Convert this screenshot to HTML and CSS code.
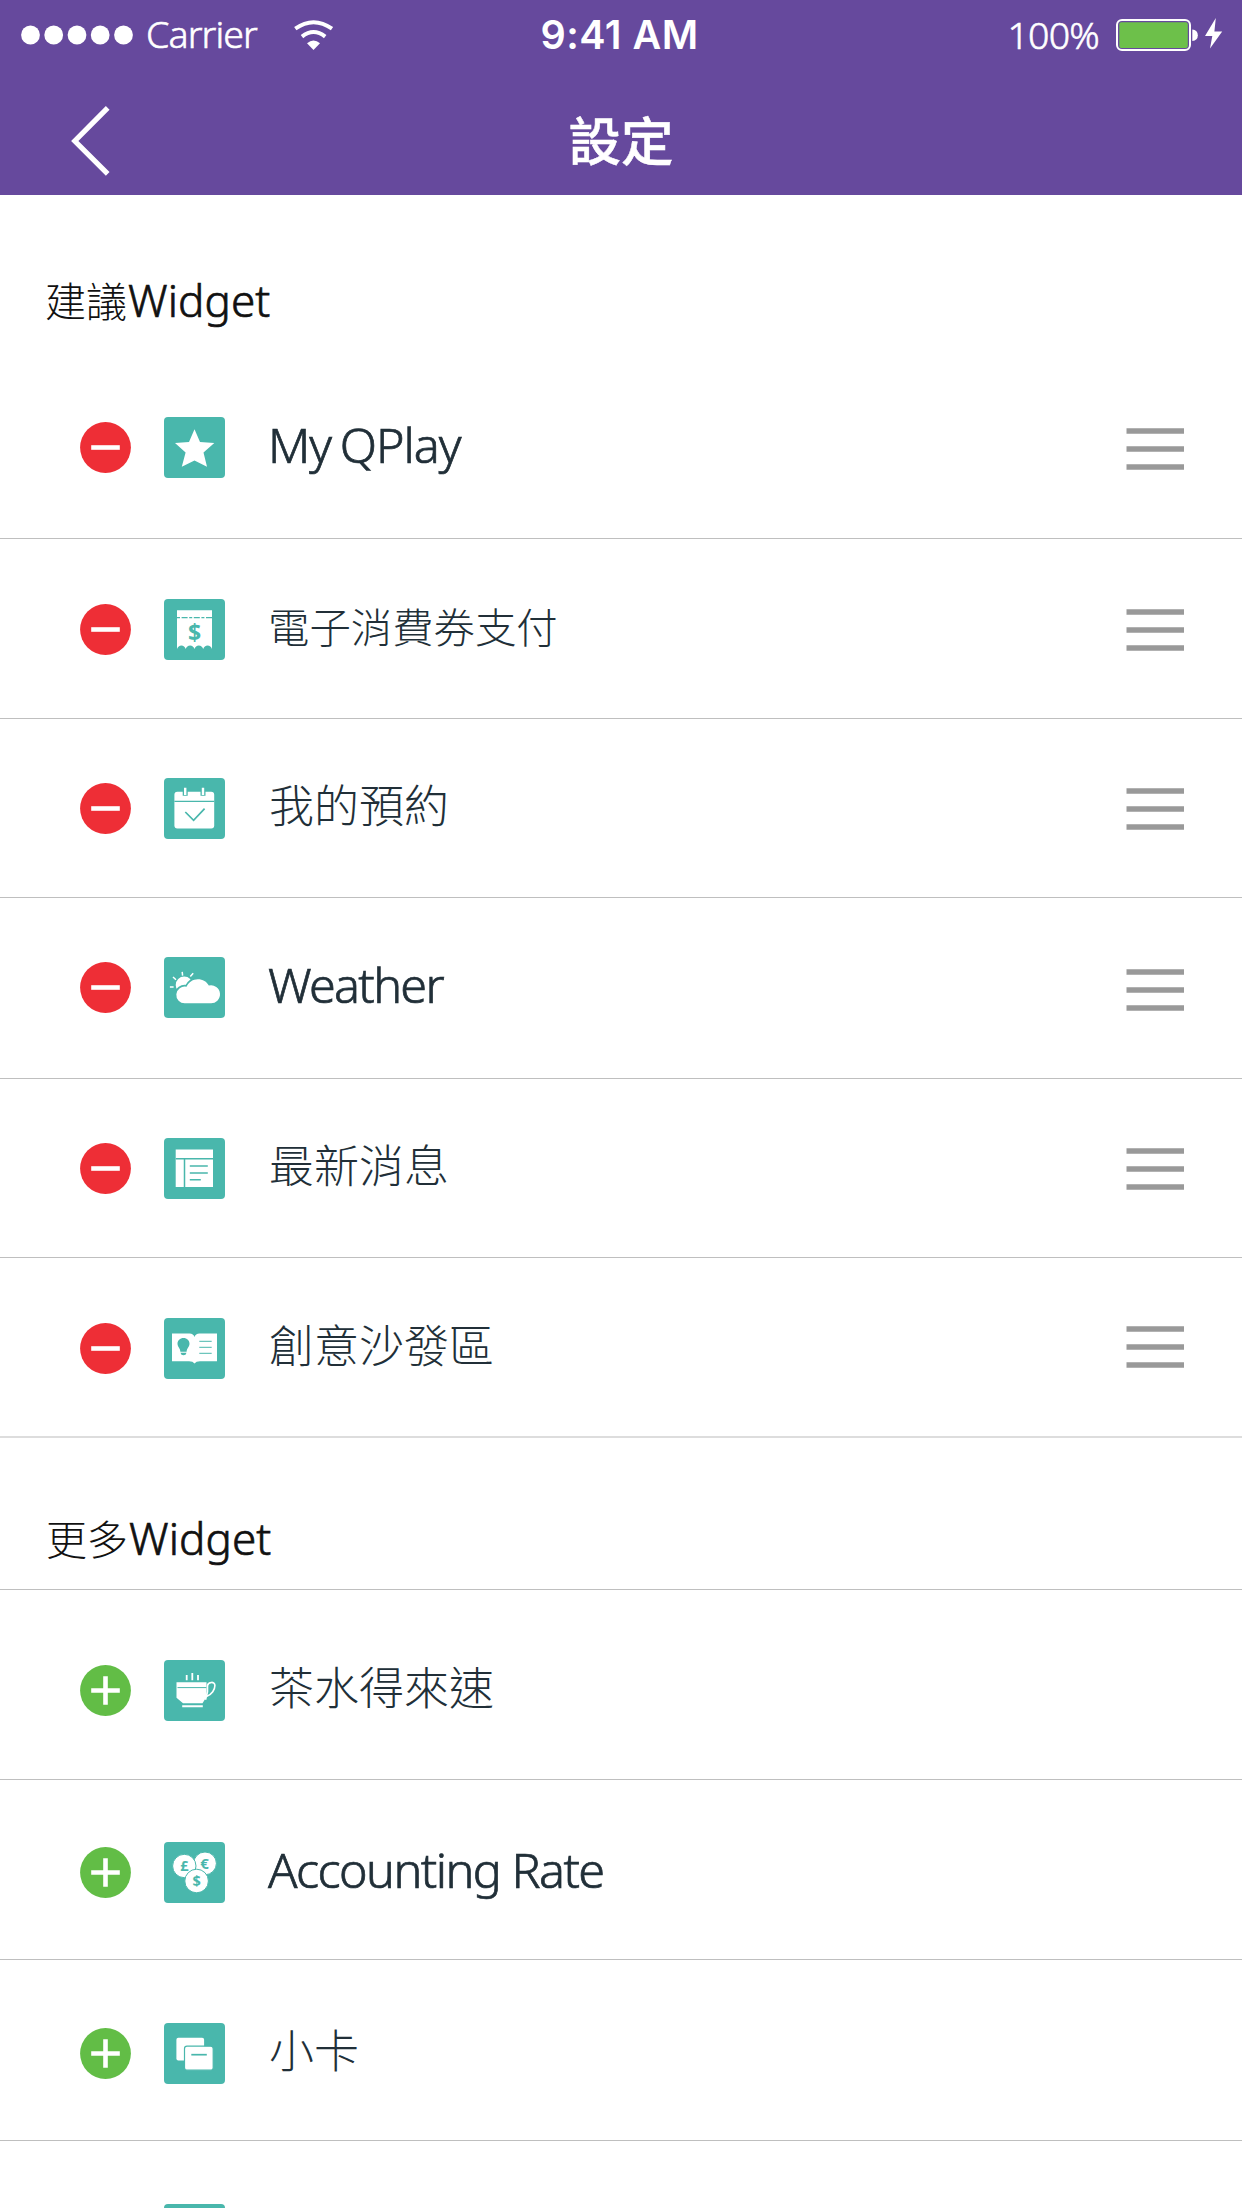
FILE: index.html
```html
<!DOCTYPE html>
<html lang="zh-Hant">
<head>
<meta charset="utf-8">
<title>設定</title>
<link rel="stylesheet" href="styles.css">
</head>
<body>
<svg class="defs" aria-hidden="true">
  <symbol id="minus" viewBox="0 0 51 51"><circle cx="25.5" cy="25.5" r="25.4" fill="#ee2e36"/><path d="M11.2 25.5h28.6" stroke="#fff" stroke-width="4.6"/></symbol>
  <symbol id="plus" viewBox="0 0 51 51"><circle cx="25.5" cy="25.5" r="25.4" fill="#62bd46"/><path d="M11.2 25.5h28.6M25.5 11.2v28.6" stroke="#fff" stroke-width="4.6"/></symbol>
  <symbol id="handle" viewBox="0 0 58 42"><path d="M.5 3h57.500M.5 21h57.500M.5 39h57.500" stroke="#999" stroke-width="5.500"/></symbol>
</svg>

<header class="header">
  <div class="status">
    <div class="status-left">
      <svg class="signal" viewBox="0 0 113 20" fill="#fff"><circle cx="9.500" cy="10" r="9.400"/><circle cx="32.700" cy="10" r="9.400"/><circle cx="56" cy="10" r="9.400"/><circle cx="79.200" cy="10" r="9.400"/><circle cx="102.500" cy="10" r="9.400"/></svg>
      <span class="carrier">Carrier</span>
      <svg class="wifi" viewBox="0 0 40 30" fill="none" stroke="#fff" stroke-width="4"><path d="M1.300 8.700Q19.500-4.300 38 8.700M8 16.600Q19.500 7.400 31.200 16.600"/><path d="M13 23.200Q19.500 18 26 23.200L19.500 30Z" fill="#fff" stroke="none"/></svg>
    </div>
    <span class="clock">9:41 AM</span>
    <div class="status-right">
      <span class="percent">100%</span>
      <svg class="battery" viewBox="0 0 108 33"><rect x="1" y="2" width="73" height="30" rx="5" fill="none" stroke="#fff" stroke-width="2"/><rect x="3.300" y="4.300" width="68.500" height="25.600" rx="2" fill="#6dc04a"/><path d="M76.300 11.500q5.500.5 5.500 5.700t-5.500 5.900z" fill="#fff"/><path d="M99.800 0L89 18h7.300L94 30.500 106.200 13.500h-7.800z" fill="#fff"/></svg>
    </div>
  </div>
  <div class="nav">
    <svg class="back" viewBox="0 0 40 70"><path d="M36.700 1.800L3.800 35l32.900 32.800" fill="none" stroke="#fff" stroke-width="5.200"/></svg>
    <h1 class="title">設定</h1>
  </div>
</header>

<main>
  <h2 class="section">建議<span class="latin">Widget</span></h2>
  <ul class="list">
    <li class="row r1"><svg class="toggle"><use href="#minus"/></svg>
      <svg class="tile" viewBox="0 0 61 61"><path fill="#fff" d="M30.500 12.300L36 25l14.300 1-10.800 9.500L43 49.700l-12.500-6.200-12.700 6.200 3.800-14.200L11 26l14-1z"/></svg>
      <span class="name latin">My QPlay</span><svg class="handle"><use href="#handle"/></svg></li>
    <li class="row r2"><svg class="toggle"><use href="#minus"/></svg>
      <svg class="tile" viewBox="0 0 61 61"><path fill="#fff" d="M13 11.300h35V50q-1.200-3.600-4.400-3.600T39.200 50q-1.200-3.600-4.400-3.600T30.500 50q-1.200-3.600-4.400-3.600T21.700 50q-1.200-3.600-4.300-3.600T13 50z"/><path d="M13 18.700h35" stroke="#49b7ac" stroke-width="1.300" stroke-dasharray="3 1.600 6 1.600"/><text class="glyph" x="30.500" y="41.800" font-size="23">$</text></svg>
      <span class="name small">電子消費券支付</span><svg class="handle"><use href="#handle"/></svg></li>
    <li class="row r3"><svg class="toggle"><use href="#minus"/></svg>
      <svg class="tile" viewBox="0 0 61 61"><rect x="10.400" y="13.700" width="39.800" height="36.700" rx="3" fill="#fff"/><path d="M10.400 23.300h39.800" stroke="#49b7ac" stroke-width="1.300"/><path d="M21.200 12v5.700M39 12v5.700" stroke="#49b7ac" stroke-width="5"/><path d="M21.200 9.700V17M39 9.700V17" stroke="#fff" stroke-width="2.400"/><path d="M21.300 34l8.300 8.300 11-11.600" fill="none" stroke="#49b7ac" stroke-width="1.700"/></svg>
      <span class="name">我的預約</span><svg class="handle"><use href="#handle"/></svg></li>
    <li class="row r4"><svg class="toggle"><use href="#minus"/></svg>
      <svg class="tile" viewBox="0 0 61 61"><circle cx="20.200" cy="28" r="8.500" fill="#fff"/><path d="M18.200 14.800l.4 3.900M29.200 16.200l-2.900 3.400M9 20l3 2.700M5.900 30h3.700" stroke="#fff" stroke-width="1.500"/><path d="M21 46.300a8.400 8.400 0 1 1 1.500-16.600C25 25 29 22.300 33.800 22.300c5 0 9 2.300 11 6.300a9 9 0 1 1 1.500 17.700z" fill="#fff" stroke="#49b7ac" stroke-width="3.400" paint-order="stroke"/></svg>
      <span class="name latin">Weather</span><svg class="handle"><use href="#handle"/></svg></li>
    <li class="row r5"><svg class="toggle"><use href="#minus"/></svg>
      <svg class="tile" viewBox="0 0 61 61"><path fill="#fff" d="M11.700 11.500H49V49H11.700z"/><path d="M11.700 20.700H49M20.500 20.700V49M25.800 28h18M25.800 34.900h18M25.800 41.800h11" stroke="#49b7ac" stroke-width="1.500"/></svg>
      <span class="name">最新消息</span><svg class="handle"><use href="#handle"/></svg></li>
    <li class="row r6"><svg class="toggle"><use href="#minus"/></svg>
      <svg class="tile" viewBox="0 0 61 61"><path fill="#fff" d="M8 15.400h17.500q4 0 5 3.600 1-3.600 5-3.600H53V43.200H36q-4 0-5.500 2.200Q29 43.200 25 43.200H8z"/><path fill="#49b7ac" d="M19.500 20c3.500 0 6 2.500 6 5.700 0 3.100-2.700 4.200-2.900 8.100h-6.200c-.2-3.900-2.900-5-2.900-8.100 0-3.200 2.500-5.700 6-5.700zM16.500 34.700h6q-.5 2.600-3 2.600t-3-2.600z"/><path d="M35.300 23.300h12.400M35.300 29.300h12.400M35.300 35.300h12.400" stroke="#49b7ac" stroke-width="1"/></svg>
      <span class="name">創意沙發區</span><svg class="handle"><use href="#handle"/></svg></li>
  </ul>

  <h2 class="section more">更多<span class="latin">Widget</span></h2>
  <ul class="list">
    <li class="row r7"><svg class="toggle"><use href="#plus"/></svg>
      <svg class="tile" viewBox="0 0 61 61"><path fill="#fff" d="M12.500 22.300h30v14.500l-4 6.500H19l-6.500-5.500zM18.200 45.200h20.600v2H18.200z"/><path d="M13.500 27.600h29" stroke="#49b7ac" stroke-width="1"/><path d="M42.500 36.500c5.500-2 8.400-7 8.400-11 0-4.200-6.600-4-7.400 0v6.300l-2 8" fill="none" stroke="#fff" stroke-width="1.600"/><path d="M22.700 15v5.200M28.300 13v7.200M34 15v5.200" stroke="#fff" stroke-width="1.800"/></svg>
      <span class="name">茶水得來速</span></li>
    <li class="row r8"><svg class="toggle"><use href="#plus"/></svg>
      <svg class="tile" viewBox="0 0 61 61"><g fill="#fff" stroke="#49b7ac" stroke-width="1"><circle cx="41" cy="21.400" r="11.400"/><circle cx="20.300" cy="24" r="11.700"/><circle cx="32.600" cy="39" r="11.800"/></g><text class="glyph" x="20.300" y="28.800" font-size="14.500">£</text><text class="glyph" x="40.500" y="26.500" font-size="15">€</text><text class="glyph" x="32.600" y="43.700" font-size="14.500">$</text></svg>
      <span class="name latin">Accounting Rate</span></li>
    <li class="row r9"><svg class="toggle"><use href="#plus"/></svg>
      <svg class="tile" viewBox="0 0 61 61"><rect x="12.400" y="14.700" width="27.700" height="22.700" rx="2" fill="#fff"/><rect x="20.500" y="23.200" width="28.700" height="24" rx="2.500" fill="#fff" stroke="#49b7ac" stroke-width="1.200"/><path d="M27.300 31.700h15.500" stroke="#49b7ac" stroke-width="1.700"/></svg>
      <span class="name">小卡</span></li>
    <li class="row r10"><span class="toggle"></span><svg class="tile" viewBox="0 0 61 61"></svg></li>
  </ul>
</main>
</body>
</html>
```
FILE: styles.css
```css
* { box-sizing: border-box; margin: 0; padding: 0; }

body {
  height: 2208px;
  overflow: hidden;
  background: #fff;
  font-family: "Noto Sans CJK TC", sans-serif;
  font-weight: 300;
}

svg { display: block; flex: none; overflow: visible; }
.defs { position: absolute; width: 0; height: 0; overflow: hidden; }

/* header */
.header { height: 195px; background: #66499d; color: #fff; }
.status {
  display: grid;
  grid-template-columns: 1fr auto 1fr;
  align-items: center;
  height: 67px;
  padding: 0 21px 0 18px;
  margin-left: 0;
  white-space: nowrap;
}
.status-left, .status-right { display: flex; align-items: center; }
.status-left { padding-left: 3px; }
.status-right { justify-content: flex-end; margin-right: -3px; }
.signal { width: 113px; height: 20px; }
.carrier { width: 146px; margin: -2px 0 0 12px; font: 300 37.5px/67px "Noto Sans", sans-serif; letter-spacing: -.9px; -webkit-text-stroke: .6px; }
.wifi { width: 40px; height: 30px; margin-left: 2px; }
.clock { padding-top: 2px; font: 600 39.5px/67px Inter, sans-serif; letter-spacing: .5px; }
.percent { margin-right: 17px; font: 300 37.5px/67px "Noto Sans", sans-serif; letter-spacing: -.8px; -webkit-text-stroke: .6px; }
.battery { width: 108px; height: 33px; margin-bottom: 1px; }

.nav { display: grid; grid-template-columns: 1fr auto 1fr; align-items: center; height: 149px; margin-top: -1px; padding: 0 71px; }
.back { width: 40px; height: 70px; }
.title { margin-top: -5px; font-size: 52.500px; font-weight: 500; line-height: 75px; -webkit-text-stroke: .5px; }

/* lists */
.section {
  height: 165px;
  padding: 72px 0 0 45px;
  font-size: 41px;
  font-weight: 300;
  line-height: 64px;
  color: #111;
}
.section .latin { margin-left: 1px; font: 300 44px/64px "Noto Sans", sans-serif; letter-spacing: .1px; -webkit-text-stroke: .7px; }
.section.more { height: 152px; padding: 67px 0 0 46px; border-bottom: 1px solid #bfbfbf; }

.list { list-style: none; }
.row {
  display: flex;
  align-items: flex-start;
  height: 180px;
  padding: 59px 58px 0 80px;
  border-bottom: 1px solid #bfbfbf;
}
.toggle { width: 51px; height: 51px; margin-top: 5px; }
.tile { width: 61px; height: 61px; margin-left: 33px; border-radius: 4px; background: #49b7ac; }
.handle { width: 58px; height: 42px; margin: 10px 0 0 auto; }
.name { margin: -5px 0 0 44px; font-size: 45px; line-height: 61px; color: #212f38; white-space: nowrap; }
.name.small { margin: -4px 0 0 43px; font-size: 41.400px; }
.name.latin { margin-top: -3px; margin-left: 43px; font: 300 48.500px/61px "Noto Sans", sans-serif; letter-spacing: -1.700px; -webkit-text-stroke: .7px; }
.glyph { fill: #49b7ac; font-family: "Open Sans", sans-serif; font-weight: 700; text-anchor: middle; }

.r1 { height: 179px; padding-top: 57px; }
.r2 { padding-top: 60px; }
.r3 { height: 179px; }
.r4 { height: 181px; padding-top: 58.500px; }
.r5 { height: 179px; }
.r6 { padding-top: 60.300px; border-bottom: 2px solid #ddd; }
.r7 { height: 190px; padding-top: 70px; }
.r8 { padding-top: 62px; }
.r9 { height: 181px; padding-top: 62.500px; }
.r10 { height: 67px; padding-top: 62.500px; border: 0; overflow: hidden; }
.r1 .handle { margin-top: 11px; }
.r4 .handle { margin-top: 12px; }
.r6 .handle { margin-top: 8px; }
.name.latin { word-spacing: 0; }
.r1 .name { letter-spacing: -1px; word-spacing: -3px; }
.r8 .name { letter-spacing: -1.550px; }
```
